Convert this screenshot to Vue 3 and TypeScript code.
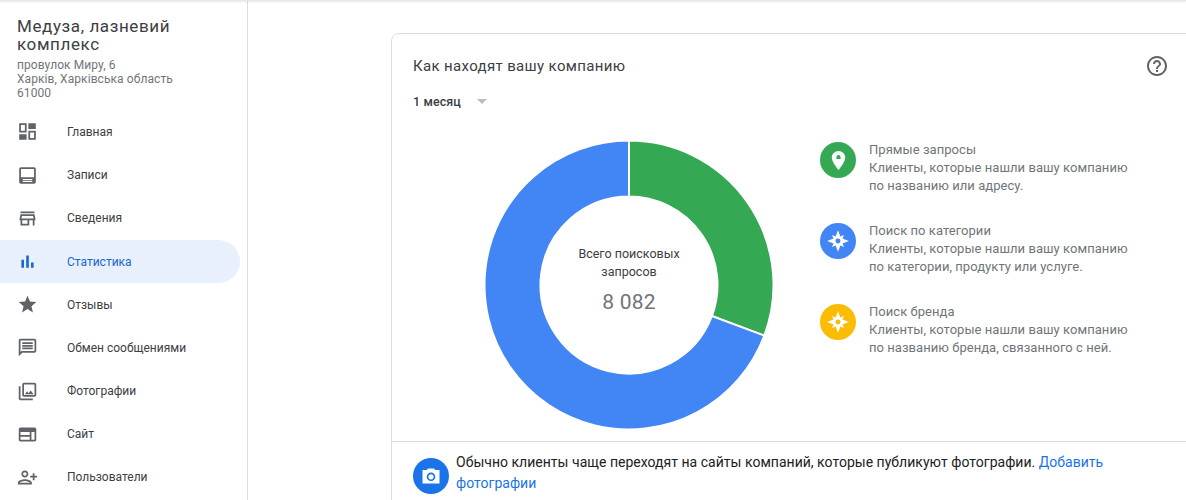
<template>
  <div class="page">
    <div class="top-shadow"></div>
    <div class="layout">
      <aside class="sidebar">
        <div class="biz">
          <h1 class="biz-name">Медуза, лазневий комплекс</h1>
          <p class="biz-addr">провулок Миру, 6<br />Харків, Харківська область<br />61000</p>
        </div>
        <nav class="nav">
          <a v-for="item in navItems" :key="item.label" class="nav-item" :class="{ active: item.active }">
            <svg class="nav-icon" viewBox="0 0 24 24" :style="{ transform: item.flip ? 'scaleX(-1)' : undefined }">
              <path :d="item.icon" fill-rule="evenodd" />
            </svg>
            <span>{{ item.label }}</span>
          </a>
        </nav>
      </aside>

      <main class="main">
        <section class="card">
          <div class="card-head">
            <h2 class="card-title">Как находят вашу компанию</h2>
            <svg class="help" viewBox="0 0 24 24">
              <path d="M11 18h2v-2h-2v2zm1-16C6.48 2 2 6.48 2 12s4.48 10 10 10 10-4.48 10-10S17.52 2 12 2zm0 18c-4.41 0-8-3.59-8-8s3.59-8 8-8 8 3.59 8 8-3.59 8-8 8zm0-14c-2.21 0-4 1.79-4 4h2c0-1.1.9-2 2-2s2 .9 2 2c0 2-3 1.75-3 5h2c0-2.25 3-2.5 3-5 0-2.21-1.79-4-4-4z" />
            </svg>
          </div>
          <div class="period">
            <span>1 месяц</span>
            <i class="caret"></i>
          </div>

          <div class="chart-row">
            <div class="donut">
              <svg viewBox="0 0 290 290" width="290" height="290">
                <path v-for="s in segments" :key="s.color" :d="s.d" :fill="s.color" stroke="#fff" stroke-width="2" />
              </svg>
              <div class="donut-label">
                <div class="donut-caption">Всего поисковых запросов</div>
                <div class="donut-value">8 082</div>
              </div>
            </div>

            <ul class="legend">
              <li v-for="l in legend" :key="l.title" class="legend-item">
                <span class="legend-dot" :style="{ background: l.color }">
                  <svg v-if="l.pin" viewBox="0 0 24 24" width="31" height="31">
                    <path fill="#fff" d="M12 4.6c-3 0-5.2 2.3-5.2 5.1 0 3.6 5.2 9.7 5.2 9.7s5.2-6.1 5.2-9.7c0-2.8-2.2-5.1-5.2-5.1z" />
                    <path :fill="l.color" d="M12 7.800a1.600 1.600 0 0 0-1.600 1.600v1.400h3.200V9.400A1.600 1.600 0 0 0 12 7.800z" />
                  </svg>
                  <svg v-else viewBox="0 0 24 24" width="26" height="26">
                    <path fill="#fff" d="M12 2l2.200 5.800 3.300-1.300-1.300 3.300L22 12l-5.800 2.200 1.300 3.300-3.300-1.300L12 22l-2.200-5.800-3.300 1.300 1.300-3.300L2 12l5.800-2.200-1.300-3.300 3.300 1.300z" />
                    <circle cx="12" cy="12" r="2.300" :fill="l.color" />
                  </svg>
                </span>
                <div class="legend-text">
                  <div>{{ l.title }}</div>
                  <div>{{ l.text }}</div>
                </div>
              </li>
            </ul>
          </div>

          <div class="tip">
            <span class="tip-icon">
              <svg viewBox="0 0 24 24" width="24" height="24">
                <path fill="#fff" fill-rule="evenodd" d="M9 4.500 7.600 6H3.500v13.500h17V6h-4.100L15 4.500zM12 8.500a4.300 4.300 0 1 1 0 8.600 4.300 4.300 0 0 1 0-8.600zm0 1.700a2.600 2.600 0 1 0 0 5.200 2.600 2.600 0 0 0 0-5.200z" />
              </svg>
            </span>
            <p class="tip-text">Обычно клиенты чаще переходят на сайты компаний, которые публикуют фотографии. <a class="tip-link">Добавить фотографии</a></p>
          </div>
        </section>
      </main>
    </div>
  </div>
</template>

<script setup lang="ts">
interface NavItem {
  label: string
  icon: string
  active?: boolean
  flip?: boolean
}

const navItems: NavItem[] = [
  { label: 'Главная', icon: 'M2.500 2.500h8.500v10.500H2.500V2.500zm2 2V11H9V4.500H4.500zM13 2.500h8.500V9H13V2.500zM2.500 15H11v6.500H2.500V15zM13 11h8.500v10.500H13V11zm2 2v6.500h4.500V13H15z' },
  { label: 'Записи', icon: 'M4.500 2.500h15c1.100 0 2 .9 2 2v15c0 1.100-.9 2-2 2h-15c-1.100 0-2-.9-2-2v-15c0-1.100.9-2 2-2zm0 2v9.500h15V4.500h-15zm2 11.500v1.300h11V16h-11zm0 2.300v1h11v-1h-11z' },
  { label: 'Сведения', icon: 'M20 4H4v2h16V4zm1 10v-2l-1-5H4l-1 5v2h1v6h10v-6h4v6h2v-6h1zm-9 4H6v-4h6v4zm-6.960-6l.6-3h12.720l.6 3H5.040z' },
  { label: 'Статистика', active: true, icon: 'M5 10h3v9H5v-9zM10.500 5h3v14h-3V5zM16 13h3v6h-3v-6z' },
  { label: 'Отзывы', icon: 'M12 17.270L18.180 21l-1.640-7.030L22 9.240l-7.190-.61L12 2 9.190 8.630 2 9.240l5.460 4.730L5.820 21z' },
  { label: 'Обмен сообщениями', icon: 'M20 2H4c-1.100 0-1.990.9-1.990 2L2 22l4-4h14c1.100 0 2-.9 2-2V4c0-1.100-.9-2-2-2zm0 14H5.170L4 17.170V4h16v12zM6 12h12v2H6zm0-3h12v2H6zm0-3h12v2H6z' },
  { label: 'Фотографии', icon: 'M20 4v12H8V4h12m0-2H8c-1.100 0-2 .9-2 2v12c0 1.100.9 2 2 2h12c1.100 0 2-.9 2-2V4c0-1.100-.9-2-2-2zm-8.500 9.670l1.690 2.260 2.480-3.100L19 15H9zM2 6v14c0 1.100.9 2 2 2h14v-2H4V6H2z' },
  { label: 'Сайт', icon: 'M20 4H4c-1.100 0-1.990.9-1.990 2L2 18c0 1.100.9 2 2 2h16c1.100 0 2-.9 2-2V6c0-1.100-.9-2-2-2zM4 9h10.500v3.500H4V9zm0 5.500h10.500V18H4v-3.500zM20 18h-3.500V9H20v9z' },
  { label: 'Пользователи', flip: true, icon: 'M15 12c2.210 0 4-1.790 4-4s-1.790-4-4-4-4 1.790-4 4 1.790 4 4 4zm0-6c1.100 0 2 .9 2 2s-.9 2-2 2-2-.9-2-2 .9-2 2-2zm0 8c-2.670 0-8 1.340-8 4v2h16v-2c0-2.660-5.330-4-8-4zm-6 4c.22-.72 3.310-2 6-2 2.700 0 5.800 1.290 6 2H9zm-3-3v-3h3v-2H6V7H4v3H1v2h3v3h2z' },
]

// donut geometry, angles in degrees clockwise from 12 o'clock
const CX = 145
const CY = 145
const OUTER = 144.5
const INNER = 88.5

function point(r: number, deg: number): string {
  const a = (deg * Math.PI) / 180
  return `${(CX + r * Math.sin(a)).toFixed(2)} ${(CY - r * Math.cos(a)).toFixed(2)}`
}

function arc(from: number, to: number): string {
  const large = to - from > 180 ? 1 : 0
  return [
    `M${point(OUTER, from)}`,
    `A${OUTER} ${OUTER} 0 ${large} 1 ${point(OUTER, to)}`,
    `L${point(INNER, to)}`,
    `A${INNER} ${INNER} 0 ${large} 0 ${point(INNER, from)}`,
    'Z',
  ].join(' ')
}

const segments = [
  { color: '#34a853', d: arc(0, 110.5) },
  { color: '#4285f4', d: arc(110.5, 360) },
]

const legend = [
  { color: '#34a853', pin: true, title: 'Прямые запросы', text: 'Клиенты, которые нашли вашу компанию по названию или адресу.' },
  { color: '#4285f4', pin: false, title: 'Поиск по категории', text: 'Клиенты, которые нашли вашу компанию по категории, продукту или услуге.' },
  { color: '#fbbc04', pin: false, title: 'Поиск бренда', text: 'Клиенты, которые нашли вашу компанию по названию бренда, связанного с ней.' },
]
</script>

<style>
html, body { margin: 0; background: #fff; }
</style>

<style scoped>
.page {
  position: relative;
  height: 500px; overflow: hidden;
  background: #fff;
  font-family: Roboto, "Liberation Sans", sans-serif;
  color: #3c4043;
}
.top-shadow {
  position: absolute; top: 0; left: 0; right: 0; height: 1px;
  background: #e8e8e8;
  box-shadow: 0 1px 2px rgba(0,0,0,0.14);
}
.layout { display: flex; height: 100%; }

.sidebar {
  width: 247px; flex: none;
  border-right: 1px solid #dadce0;
  padding-top: 17px;
}
.biz { padding: 0 50px 0 17px; }
.biz-name {
  margin: 0; font-size: 17px; font-weight: 400; line-height: 18px;
  letter-spacing: 0.6px; color: #3c4043;
}
.biz-addr {
  margin: 5px 0 0; font-size: 12px; line-height: 14px; color: #70757a;
  letter-spacing: 0.08px; white-space: nowrap;
}
.nav { margin-top: 10.4px; display: flex; flex-direction: column; }
.nav-item {
  display: flex; align-items: center; gap: 29px;
  height: 43.2px; padding-left: 17px; width: 223px;
  border-radius: 0 22px 22px 0;
  font-size: 12px; color: #3c4043;
}
.nav-icon { width: 21px; height: 21px; fill: #5f6368; flex: none; }
.nav-item.active { background: #e8f0fe; color: #1967d2; }
.nav-item.active .nav-icon { fill: #1967d2; }

.main { flex: 1; min-width: 0; padding: 33px 0 0 143px; }
.card {
  width: 820px;
  border: 1px solid #dadce0; border-radius: 8px 0 0 0;
  background: #fff;
}
.card-head {
  display: flex; align-items: center; justify-content: space-between;
  padding: 20px 43px 0 21px; height: 24px;
}
.card-title { margin: 0; font-size: 15px; font-weight: 400; color: #3c4043; letter-spacing: 0.35px; }
.help { width: 24px; height: 24px; fill: #5f6368; }
.period {
  display: flex; align-items: center; gap: 16px;
  margin: 13px 0 0 21px; height: 20px;
  font-size: 12.5px; font-weight: 500; color: #3c4043;
  letter-spacing: 0.1px;
}
.caret {
  width: 0; height: 0;
  border-left: 5.5px solid transparent; border-right: 5.5px solid transparent;
  border-top: 5px solid #bdbdbd;
}

.chart-row { display: flex; height: 330px; padding-top: 29px; box-sizing: border-box; }
.donut { position: relative; width: 290px; height: 290px; margin-left: 92px; flex: none; }
.donut svg { display: block; }
.donut-label {
  position: absolute; inset: 0;
  display: flex; flex-direction: column; align-items: center; justify-content: center;
  text-align: center;
}
.donut-caption { width: 120px; font-size: 12.5px; line-height: 18px; color: #3c4043; margin-top: -12px; }
.donut-value { margin-top: 9px; font-size: 21px; line-height: 24px; color: #70757a; letter-spacing: 0.25px; }

.legend { list-style: none; margin: 1px 0 0 46px; padding: 0; display: flex; flex-direction: column; gap: 27px; }
.legend-item { display: flex; gap: 13px; width: 310px; }
.legend-dot {
  width: 36px; height: 36px; border-radius: 50%; flex: none; margin-top: 1px;
  display: flex; align-items: center; justify-content: center;
}
.legend-text { width: 270px; font-size: 13px; line-height: 18px; color: #70757a; letter-spacing: 0.05px; }

.tip {
  display: flex; gap: 7px;
  border-top: 1px solid #dadce0;
  padding: 16px 60px 40px 21px;
}
.tip-icon {
  width: 36px; height: 36px; border-radius: 50%; background: #1a73e8; flex: none;
  display: flex; align-items: center; justify-content: center;
}
.tip-text { margin: -6px 0 0; font-size: 14px; line-height: 21px; color: #202124; width: 680px; letter-spacing: 0.02px; }
.tip-link { color: #1a73e8; }
</style>
